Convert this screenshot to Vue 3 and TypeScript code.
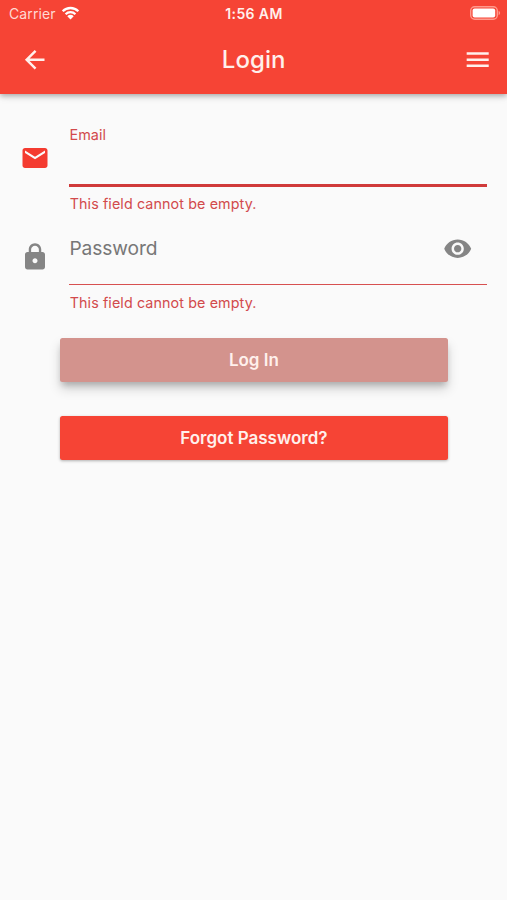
<script setup lang="ts">
import { ref } from 'vue'

interface Field {
  id: string
  label: string
  type: string
  icon: string
  active: boolean
  error: string
}

const revealed = ref(false)

const fields: Field[] = [
  {
    id: 'email',
    label: 'Email',
    type: 'email',
    icon: 'M20 4H4c-1.1 0-1.99.9-1.99 2L2 18c0 1.1.9 2 2 2h16c1.1 0 2-.9 2-2V6c0-1.1-.9-2-2-2zm0 4l-8 5-8-5V6l8 5 8-5v2z',
    active: true,
    error: 'This field cannot be empty.',
  },
  {
    id: 'password',
    label: 'Password',
    type: 'password',
    icon: 'M18 8h-1V6c0-2.76-2.24-5-5-5S7 3.24 7 6v2H6c-1.1 0-2 .9-2 2v10c0 1.1.9 2 2 2h12c1.1 0 2-.9 2-2V10c0-1.1-.9-2-2-2zm-6 9c-1.1 0-2-.9-2-2s.9-2 2-2 2 .9 2 2-.9 2-2 2zm3.1-9H8.9V6c0-1.71 1.39-3.1 3.1-3.1 1.71 0 3.1 1.39 3.1 3.1v2z',
    active: false,
    error: 'This field cannot be empty.',
  },
]
</script>

<template>
  <div class="screen">
    <header class="header">
      <div class="status">
        <div class="carrier">
          <span class="carrier-name">Carrier</span>
          <svg class="wifi" viewBox="0 0 18 14">
            <path d="M1.2 5.2C5.5 .9 12.5 .9 16.8 5.2" />
            <path d="M4.1 8.2c2.7-2.7 7.1-2.7 9.8 0" />
            <path class="solid" d="M5.8 10.2c1.8-1.8 4.6-1.8 6.4 0L9 13.6z" />
          </svg>
        </div>
        <span class="time">1:56 AM</span>
        <div class="power">
          <svg class="battery" viewBox="0 0 31 14">
            <rect class="battery-shell" x=".7" y=".7" width="26.6" height="12.6" rx="4" />
            <rect class="battery-level" x="2.6" y="2.5" width="22.6" height="9" rx="2" />
            <path class="battery-tip" d="M28.6 4.8c2 .8 2 3.6 0 4.4z" />
          </svg>
        </div>
      </div>
      <nav class="bar">
        <button class="icon-button" aria-label="Back">
          <svg class="icon" viewBox="0 0 24 24"><path d="M20 11H7.83l5.59-5.59L12 4l-8 8 8 8 1.41-1.41L7.83 13H20v-2z" /></svg>
        </button>
        <h1 class="title">Login</h1>
        <button class="icon-button menu" aria-label="Menu">
          <svg class="icon" viewBox="0 0 24 24"><path d="M3 18h18v-2H3v2zm0-5h18v-2H3v2zm0-7v2h18V6H3z" /></svg>
        </button>
      </nav>
    </header>

    <form class="form" novalidate @submit.prevent>
      <div v-for="field in fields" :key="field.id" class="field" :class="{ active: field.active }">
        <svg class="icon lead" viewBox="0 0 24 24"><path :d="field.icon" /></svg>
        <div class="body">
          <div class="control">
            <label class="label" :for="field.id">{{ field.label }}</label>
            <input :id="field.id" class="input" :type="field.type === 'password' && revealed ? 'text' : field.type" />
            <button v-if="field.type === 'password'" type="button" class="icon-button eye" aria-label="Show password" @click="revealed = !revealed">
              <svg class="icon" viewBox="0 0 24 24"><path d="M12 4.5C7 4.5 2.73 7.61 1 12c1.73 4.39 6 7.5 11 7.5s9.27-3.11 11-7.5c-1.73-4.39-6-7.5-11-7.5zM12 17c-2.76 0-5-2.24-5-5s2.24-5 5-5 5 2.24 5 5-2.24 5-5 5zm0-8c-1.66 0-3 1.34-3 3s1.34 3 3 3 3-1.34 3-3-1.34-3-3-3z" /></svg>
            </button>
          </div>
          <p class="error">{{ field.error }}</p>
        </div>
      </div>
      <div class="actions">
        <button type="submit" class="action login">Log In</button>
        <button type="button" class="action forgot">Forgot Password?</button>
      </div>
    </form>
  </div>
</template>

<style>
body {
  background: #fafafa;
}
</style>

<style scoped>
.screen {
  min-height: 900px;
  background: #fafafa;
  font-family: Inter, "Liberation Sans", sans-serif;
}

button {
  border: 0;
  padding: 0;
  background: none;
  color: inherit;
  font-family: inherit;
}

.header {
  height: 94px;
  background: #f64435;
  color: #fff0ec;
  box-shadow: 0 2px 5px rgba(0, 0, 0, 0.28), 0 4px 8px rgba(0, 0, 0, 0.06);
}

.status {
  display: grid;
  grid-template-columns: 1fr auto 1fr;
  align-items: center;
  height: 27px;
  padding: 0 7px 0 9px;
}

.carrier {
  display: flex;
  align-items: center;
  gap: 5px;
}

.carrier-name {
  font-size: 14px;
  line-height: 27px;
  letter-spacing: 0.1px;
  color: #ffd9d3;
}

.wifi {
  width: 19px;
  height: 14px;
  margin-top: -1px;
  fill: none;
  stroke: #fff;
  stroke-width: 2.3;
}

.wifi .solid {
  fill: #fff;
  stroke: none;
}

.time {
  margin-right: 1px;
  font-size: 14px;
  font-weight: 600;
  line-height: 27px;
  letter-spacing: 0.4px;
}

.power {
  display: flex;
  justify-content: flex-end;
}

.battery {
  width: 31px;
  height: 14px;
  margin-top: -1px;
  margin-right: -1px;
}

.battery-shell {
  fill: none;
  stroke: #ff9a8d;
  stroke-width: 1.4;
}

.battery-level {
  fill: #fff;
}

.battery-tip {
  fill: #ff9a8d;
}

.bar {
  display: grid;
  grid-template-columns: 1fr auto 1fr;
  align-items: center;
  height: 64px;
  padding: 0 15px 0 20.4px;
}

.icon-button {
  display: block;
  width: 29px;
  height: 29px;
}

.menu {
  justify-self: end;
}

.icon {
  display: block;
  width: 29.4px;
  height: 29.4px;
  fill: currentColor;
}

.title {
  margin: 2px 5px 0 0;
  font-size: 24px;
  font-weight: 500;
  line-height: 60px;
  letter-spacing: 0.1px;
}

.form {
  padding: 25px 20px 0 20px;
}

.field {
  display: flex;
  height: 99px;
  color: #858585;
}

.lead {
  flex: none;
  width: 30px;
  height: 30px;
  margin: 24px 19.4px 0 0;
}

.field.active .lead {
  color: #f43b30;
}

.body {
  flex: 1;
}

.control {
  display: flex;
  align-items: flex-start;
  box-sizing: border-box;
  height: 67px;
  border-bottom: 1.5px solid #d75050;
}

.label {
  padding-top: 17px;
  font-size: 19.2px;
  line-height: 26px;
  letter-spacing: -0.1px;
  color: #777;
}

.input {
  flex: 1;
  min-width: 0;
  height: 100%;
  padding: 0;
  border: 0;
  outline: 0;
  background: none;
}

.eye {
  margin: 15.8px 14.6px 0 0;
}

.active .control {
  height: 68px;
  border-bottom: 3px solid #d03a3a;
}

.active .label {
  padding-top: 6px;
  font-size: 14.4px;
  line-height: 20px;
  letter-spacing: 0.1px;
  color: #d24a4c;
}

.error {
  margin: 9px 0 0 0.3px;
  font-size: 14.3px;
  line-height: 18px;
  letter-spacing: 0.11px;
  color: #d24a4c;
}

.active .error {
  margin-top: 8px;
}

.actions {
  display: flex;
  flex-direction: column;
  gap: 34px;
  width: 388.6px;
  margin: 21px 0 0 39.6px;
}

.action {
  height: 44px;
  border-radius: 2.5px;
  font-size: 17px;
  font-weight: 600;
  line-height: 44px;
  color: #fff0ec;
}

.login {
  background: #d3938d;
  box-shadow: 0 5px 6px -2px rgba(0, 0, 0, 0.2), 0 7px 12px rgba(0, 0, 0, 0.16);
}

.forgot {
  background: #f64435;
  box-shadow: 0 1px 3px rgba(0, 0, 0, 0.3);
}
</style>
